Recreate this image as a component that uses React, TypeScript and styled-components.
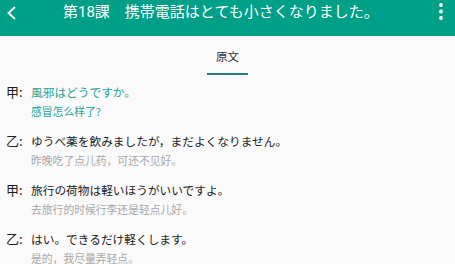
import styled, { createGlobalStyle } from 'styled-components';

const GlobalStyle = createGlobalStyle`
    html, body {
        margin: 0;
        padding: 0;
        background: #fafafa;
    }
    body {
        font-family: Roboto, "Noto Sans CJK JP", sans-serif;
    }
`;

const Page = styled.div`
    width: 455px;
    height: 264px;
    overflow: hidden;
    background: #fafafa;
`;

const AppBar = styled.header`
    height: 36px;
    display: flex;
    align-items: flex-start;
    background: #009f88;
    color: #ffffff;
`;

const BackButton = styled.div`
    width: 63px;
    height: 25px;
    display: flex;
    align-items: center;
    padding-left: 6px;
    box-sizing: border-box;
`;

const Title = styled.h1`
    flex: 1;
    margin: 0;
    font-size: 15px;
    font-weight: 400;
    line-height: 25px;
    white-space: nowrap;
    font-family: Roboto, "Noto Sans CJK JP", sans-serif;
`;

const MenuButton = styled.div`
    width: 28px;
    height: 25px;
    display: flex;
    justify-content: center;
    padding-top: 2px;
`;

const TabBar = styled.nav`
    height: 39px;
    display: flex;
    justify-content: center;
    background: #fafafa;
`;

const Tab = styled.div<{ $active?: boolean }>`
    width: 41px;
    height: 100%;
    box-sizing: border-box;
    display: flex;
    align-items: center;
    justify-content: center;
    padding-top: 3px;
    font-size: 11.5px;
    color: #333333;
    border-bottom: 2.3px solid ${(p) => (p.$active ? '#247d77' : 'transparent')};
    font-family: "Noto Sans CJK JP", sans-serif;
`;

const Dialog = styled.main`
    display: flex;
    flex-direction: column;
    gap: 11px;
    padding-top: 6.5px;
`;

const Line = styled.div`
    display: flex;
`;

const Speaker = styled.span`
    width: 25px;
    padding-left: 6px;
    font-size: 13px;
    line-height: 20px;
    color: #212121;
    font-family: "Noto Sans CJK JP", sans-serif;
`;

const Body = styled.div`
    display: flex;
    flex-direction: column;
`;

const Original = styled.div<{ $current?: boolean }>`
    font-size: 11.7px;
    line-height: 20px;
    white-space: nowrap;
    color: ${(p) => (p.$current ? '#22a396' : '#212121')};
    font-family: "Noto Sans CJK JP", sans-serif;
`;

const Translation = styled.div<{ $current?: boolean }>`
    font-size: 10.8px;
    line-height: 18px;
    white-space: nowrap;
    color: ${(p) => (p.$current ? '#22a396' : '#a8a8a8')};
    font-family: "Noto Sans CJK SC", sans-serif;
`;

const lines = [
    { who: '甲', ja: '風邪はどうですか。', zh: '感冒怎么样了?' },
    { who: '乙', ja: 'ゆうべ薬を飲みましたが，まだよくなりません。', zh: '昨晚吃了点儿药，可还不见好。' },
    { who: '甲', ja: '旅行の荷物は軽いほうがいいですよ。', zh: '去旅行的时候行李还是轻点儿好。' },
    { who: '乙', ja: 'はい。できるだけ軽くします。', zh: '是的，我尽量弄轻点。' },
];

export default function App() {
    return (
        <Page>
            <GlobalStyle />
            <AppBar>
                <BackButton>
                    <svg width="12" height="14" viewBox="0 0 12 14">
                        <path d="M9 1 L2.5 7 L9 13" fill="none" stroke="#fff" strokeWidth="1.8" />
                    </svg>
                </BackButton>
                <Title>第18課　携帯電話はとても小さくなりました。</Title>
                <MenuButton>
                    <svg width="6" height="20" viewBox="0 0 6 20">
                        <circle cx="3" cy="3" r="1.9" fill="#fff" />
                        <circle cx="3" cy="9.5" r="1.9" fill="#fff" />
                        <circle cx="3" cy="16" r="1.9" fill="#fff" />
                    </svg>
                </MenuButton>
            </AppBar>
            <TabBar>
                <Tab $active>原文</Tab>
            </TabBar>
            <Dialog>
                {lines.map((l, i) => (
                    <Line key={i}>
                        <Speaker>{l.who}:</Speaker>
                        <Body>
                            <Original $current={i === 0}>{l.ja}</Original>
                            <Translation $current={i === 0}>{l.zh}</Translation>
                        </Body>
                    </Line>
                ))}
            </Dialog>
        </Page>
    );
}
